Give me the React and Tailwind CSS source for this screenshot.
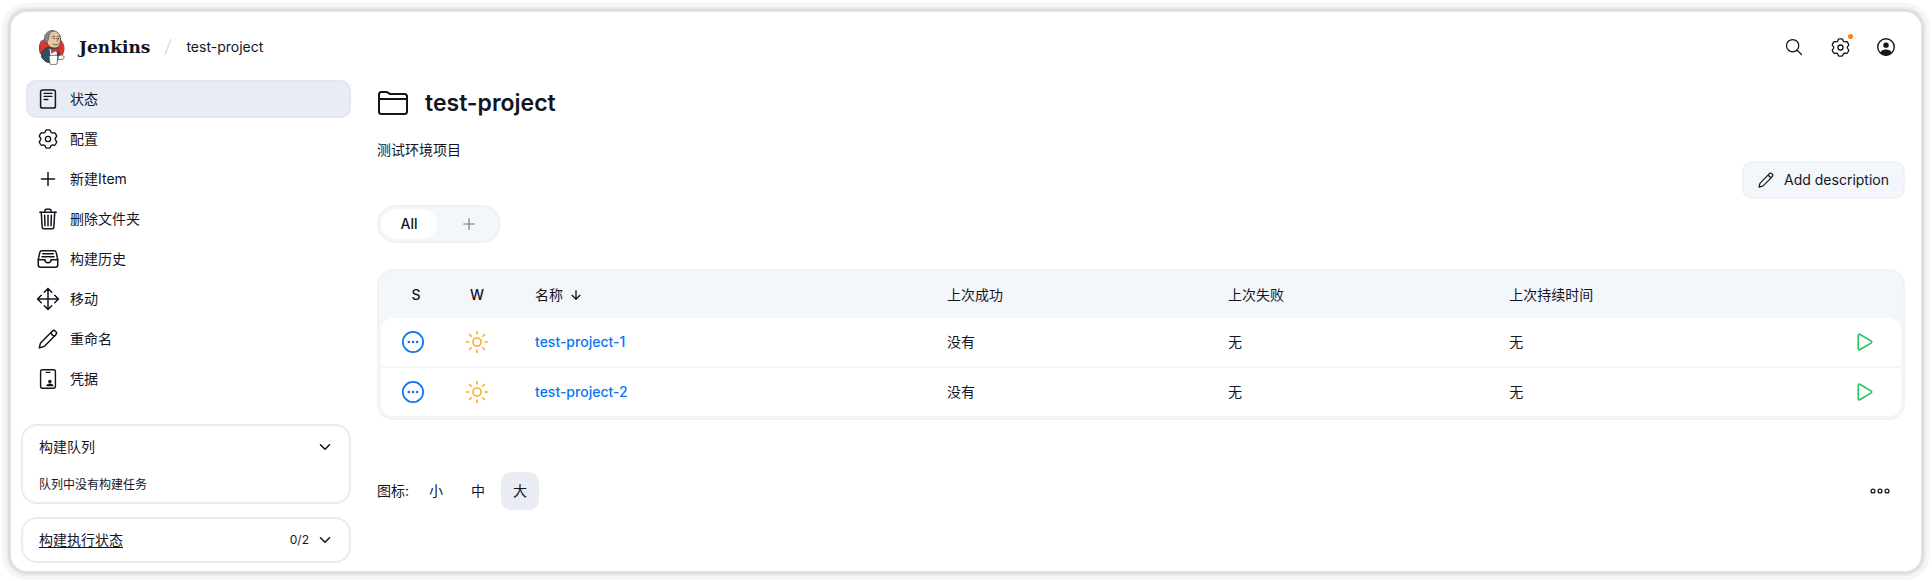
import React from "react";
import {
  IoTrashOutline,
  IoFileTrayFullOutline,
  IoMoveOutline,
  IoPlayOutline,
  IoSearchOutline,
  IoSunnyOutline,
} from "react-icons/io5";

const stroke = {
  fill: "none",
  stroke: "currentColor",
  strokeWidth: 32,
  strokeLinecap: "round",
  strokeLinejoin: "round",
};

function Svg({ className, children }) {
  return (
    <svg viewBox="0 0 512 512" className={className} aria-hidden="true" {...stroke}>
      {children}
    </svg>
  );
}

const gearPath = (() => {
  const points = [];
  for (let i = 0; i < 120; i += 1) {
    const a = (i / 120) * Math.PI * 2;
    const wave = Math.tanh(2.2 * (Math.cos(6 * (a - Math.PI / 2)) + 0.35));
    const r = 208 + 26 * wave;
    points.push(`${(256 + r * Math.cos(a)).toFixed(1)} ${(256 + r * Math.sin(a)).toFixed(1)}`);
  }
  return `M${points.join("L")}Z`;
})();

const GearIcon = ({ className }) => (
  <Svg className={className}>
    <path d={gearPath} strokeWidth="36" />
    <circle cx="256" cy="256" r="68" strokeWidth="36" />
  </Svg>
);

const StatusIcon = ({ className }) => (
  <Svg className={className}>
    <rect x="66" y="24" width="380" height="464" rx="48" strokeWidth="38" />
    <path d="M156 112h200M156 188h200M156 268h96" strokeWidth="36" />
  </Svg>
);

const PlusIcon = ({ className }) => (
  <Svg className={className}>
    <path d="M256 88v336M88 256h336" strokeWidth="38" />
  </Svg>
);

const PencilIcon = ({ className }) => (
  <Svg className={className}>
    <path d="M358 62c26-26 58-34 80-12l22 22c22 22 16 56-10 82L170 434c-10 10-20 16-34 20L32 484l26-104c4-14 10-24 20-34L358 62z" strokeWidth="38" />
    <path d="M340 82c0 54 34 90 90 92" strokeWidth="38" />
  </Svg>
);

const CredentialsIcon = ({ className }) => (
  <Svg className={className}>
    <rect x="66" y="20" width="380" height="472" rx="52" strokeWidth="36" />
    <path d="M208 84h96" />
    <g fill="currentColor" stroke="none">
      <circle cx="304" cy="318" r="46" />
      <path d="M212 444c0-50 38-72 92-72s92 22 92 72z" />
    </g>
  </Svg>
);

const FolderIcon = ({ className }) => (
  <Svg className={className}>
    <path d="M440 432H72a40 40 0 0 1-40-40V120a40 40 0 0 1 40-40h75.900a40 40 0 0 1 22.200 6.700l27.800 18.600a40 40 0 0 0 22.200 6.700H440a40 40 0 0 1 40 40v240a40 40 0 0 1-40 40zM32 192h448" />
  </Svg>
);

const UserIcon = ({ className }) => (
  <Svg className={className}>
    <circle cx="256" cy="256" r="212" strokeWidth="36" />
    <g fill="currentColor" stroke="none">
      <circle cx="256" cy="208" r="70" />
      <path d="M110 400c20-56 80-80 146-80s126 24 146 80c-36 44-88 72-146 72s-110-28-146-72z" />
    </g>
  </Svg>
);

const ChevronIcon = ({ className }) => (
  <Svg className={className}>
    <path d="M112 184l144 144 144-144" strokeWidth="50" />
  </Svg>
);

const SortArrowIcon = ({ className }) => (
  <Svg className={className}>
    <path d="M112 268l144 144 144-144M256 392V100" strokeWidth="48" />
  </Svg>
);

const NotBuiltIcon = ({ className }) => (
  <Svg className={className}>
    <circle cx="256" cy="256" r="236" strokeWidth="40" />
    <g fill="currentColor" stroke="none">
      <circle cx="160" cy="256" r="30" />
      <circle cx="256" cy="256" r="30" />
      <circle cx="352" cy="256" r="30" />
    </g>
  </Svg>
);

const MoreIcon = ({ className }) => (
  <Svg className={className}>
    <circle cx="76" cy="256" r="50" />
    <circle cx="256" cy="256" r="50" />
    <circle cx="436" cy="256" r="50" />
  </Svg>
);

function JenkinsLogo() {
  return (
    <svg viewBox="0 0 52 70" className="h-[35px] w-[26px]" aria-hidden="true">
      <ellipse cx="26" cy="37" rx="25" ry="25" fill="#d33833" />
      <path d="M3 48c-3-10-3-20 3-28" fill="none" stroke="#7d2a27" strokeWidth="2" />
      <path d="M5 54c3 5 7 9 12 11l18-1 5-8c1-9-1-17-6-20l-18-1c-7 4-11 10-11 19z" fill="#335061" stroke="#1d2b35" strokeWidth="1.500" />
      <path d="M21 37l7 5 7-5 1 16H23z" fill="#f4f4f4" />
      <path d="M14 16C15 5 23 1 30 2c8 1 13 7 13 16 0 11-3 18-12 18-8 0-16-6-17-20z" fill="#e6c8a4" stroke="#5b4333" strokeWidth="1.800" />
      <path d="M15 26c-5-5-6-14-1-19 4-5 10-7 16-6-6 2-10 6-10 11 0 5-2 10-5 14z" fill="#85888c" stroke="#4e4f55" strokeWidth="1.200" />
      <path d="M26 14c2-2 4-2 6-1M36 13c2-1 4-1 5 0M35 16c2 3 4 5 1 7M28 28c4 3 8 2 11 0" fill="none" stroke="#5a3b2a" strokeWidth="1.600" strokeLinecap="round" />
      <circle cx="30" cy="17" r="1.400" fill="#231f20" />
      <circle cx="39" cy="17" r="1.400" fill="#231f20" />
      <path d="M24 36l8 4 8-5v10l-8-3-7 4z" fill="#d33833" stroke="#81211f" strokeWidth="1" />
      <path d="M20 52c6-2 12-2 18 0l-2 16c-5 2-10 2-14 0z" fill="#fff" stroke="#44494e" strokeWidth="1.500" />
      <path d="M38 54c4-5 9-5 12-1 1 4-2 6-6 6l-6-1z" fill="#fff" stroke="#44494e" strokeWidth="1.500" />
    </svg>
  );
}

const navItems = [
  { label: "状态", Icon: StatusIcon, active: true },
  { label: "配置", Icon: GearIcon },
  { label: "新建Item", Icon: PlusIcon },
  { label: "删除文件夹", Icon: IoTrashOutline, wide: true },
  { label: "构建历史", Icon: IoFileTrayFullOutline, wide: true },
  { label: "移动", Icon: IoMoveOutline, wide: true },
  { label: "重命名", Icon: PencilIcon },
  { label: "凭据", Icon: CredentialsIcon },
];

const jobs = ["test-project-1", "test-project-2"];

function Header() {
  return (
    <header className="flex h-[68px] items-center justify-between pt-0.5 pr-4 pl-7">
      <nav aria-label="面包屑" className="flex items-center">
        <a href="#home" className="flex items-center gap-3.5">
          <JenkinsLogo />
          <span className="font-['DejaVu_Serif',serif] text-[17px] font-bold">Jenkins</span>
        </a>
        <svg viewBox="0 0 8 18" className="mx-3.5 h-[18px] w-2" aria-hidden="true">
          <path d="M7 1L1 17" stroke="#d9dee8" strokeWidth="1.500" fill="none" />
        </svg>
        <a href="#project">test-project</a>
      </nav>
      <div className="flex items-center gap-2">
        <button type="button" aria-label="搜索" className="grid size-[38px] place-items-center">
          <IoSearchOutline className="size-5" />
        </button>
        <button type="button" aria-label="系统管理" className="relative grid size-[38px] place-items-center">
          <GearIcon className="size-[19px]" />
          <span className="absolute top-1.5 right-1.5 size-[5px] rounded-full bg-[#fe820a]" />
        </button>
        <button type="button" aria-label="用户" className="grid size-[38px] place-items-center">
          <UserIcon className="size-5" />
        </button>
      </div>
    </header>
  );
}

function Sidebar() {
  return (
    <aside className="flex w-[340px] shrink-0 flex-col pl-2.5">
      <nav aria-label="任务" className="flex flex-col gap-0.5 pl-[5px]">
        {navItems.map(({ label, Icon, active, wide }) => (
          <a
            key={label}
            href="#task"
            className={
              active
                ? "flex h-[38px] items-center gap-3 rounded-[10px] border-2 border-[#e2e6ef] bg-[#e8ecf4] px-2.5"
                : "flex h-[38px] items-center gap-3 rounded-[10px] border-2 border-transparent px-2.5"
            }
          >
            <Icon className={wide ? "-m-0.5 size-6" : "size-5"} />
            <span>{label}</span>
          </a>
        ))}
      </nav>
      <section className="mt-[26px] rounded-2xl border-2 border-[#e8edf4] px-4">
        <div className="flex h-[42px] items-center justify-between">
          <h2>构建队列</h2>
          <button type="button" aria-label="折叠构建队列">
            <ChevronIcon className="size-4" />
          </button>
        </div>
        <p className="flex h-[34px] items-center text-xs">队列中没有构建任务</p>
      </section>
      <section className="mt-[13px] flex h-[46px] items-center justify-between rounded-2xl border-2 border-[#e8edf4] px-4">
        <a href="#executors" className="underline underline-offset-2">
          构建执行状态
        </a>
        <div className="flex items-center gap-2">
          <span className="text-xs">0/2</span>
          <button type="button" aria-label="折叠构建执行状态">
            <ChevronIcon className="size-4" />
          </button>
        </div>
      </section>
    </aside>
  );
}

function JobTable() {
  return (
    <div className="mt-[26px] rounded-2xl border-2 border-[#f0f2f6] bg-[#f3f6fa] px-0.5">
      <table className="w-full table-fixed border-separate border-spacing-x-0 border-spacing-y-0.5 text-left">
        <colgroup>
          <col className="w-16" />
          <col className="w-16" />
          <col className="w-[27.1%]" />
          <col className="w-[18.5%]" />
          <col className="w-[18.5%]" />
          <col />
          <col className="w-[72px]" />
        </colgroup>
        <thead>
          <tr className="h-[43px]">
            <th className="pl-1.5 text-center font-medium">S</th>
            <th className="text-center font-medium">W</th>
            <th className="pl-[26px] font-normal">
              <button type="button" className="flex items-center gap-1.5">
                名称
                <SortArrowIcon className="size-3.5" />
              </button>
            </th>
            <th className="pl-[26px] font-normal">上次成功</th>
            <th className="pl-[26px] font-normal">上次失败</th>
            <th className="pl-[26px] font-normal">上次持续时间</th>
            <th aria-label="操作" />
          </tr>
        </thead>
        <tbody>
          {jobs.map((name) => (
            <tr key={name} className="group h-12">
              <td className="rounded-l-[3px] bg-white group-first:rounded-tl-xl group-last:rounded-bl-xl">
                <NotBuiltIcon className="mx-auto size-[22px] text-[#0a74f5]" />
              </td>
              <td className="bg-white">
                <IoSunnyOutline className="mx-auto size-[26px] text-[#fdac2e]" />
              </td>
              <td className="bg-white pl-[26px]">
                <a href="#job" className="font-medium text-[#0a74f5]">
                  {name}
                </a>
              </td>
              <td className="bg-white pl-[26px]">没有</td>
              <td className="bg-white pl-[26px]">无</td>
              <td className="bg-white pl-[26px]">无</td>
              <td className="rounded-r-[3px] bg-white group-first:rounded-tr-xl group-last:rounded-br-xl">
                <button type="button" aria-label={`构建 ${name}`} className="mx-auto block">
                  <IoPlayOutline className="size-6 text-[#1ec35c]" />
                </button>
              </td>
            </tr>
          ))}
        </tbody>
      </table>
    </div>
  );
}

function Main() {
  return (
    <main className="min-w-0 flex-1 pt-1 pr-4 pl-[26px]">
      <div className="flex h-[38px] items-center gap-4">
        <FolderIcon className="size-8" />
        <h1 className="text-[23px] font-semibold">test-project</h1>
      </div>
      <p className="mt-[18px] h-[21px] leading-5">测试环境项目</p>
      <div className="flex justify-end">
        <button
          type="button"
          className="flex h-[38px] items-center gap-2.5 rounded-[10px] border-2 border-[#f0f2f6] bg-[#f3f6fa] px-3.5"
        >
          <PencilIcon className="size-4" />
          Add description
        </button>
      </div>
      <div className="mt-1.5 flex">
        <div className="flex h-[38px] items-center gap-1 rounded-full border-2 border-[#eff1f5] bg-[#f3f6fa] p-0.5">
          <a href="#all" className="flex h-[30px] w-14 items-center justify-center rounded-full bg-white font-medium">
            All
          </a>
          <a href="#new-view" aria-label="新建视图" className="grid h-[30px] w-14 place-items-center text-[#747582]">
            <PlusIcon className="size-4" />
          </a>
        </div>
      </div>
      <JobTable />
      <div className="mt-[52px] flex items-center justify-between">
        <div className="flex items-center gap-1">
          <span className="w-9 whitespace-nowrap">图标:</span>
          <button type="button" className="size-[38px]">小</button>
          <button type="button" className="size-[38px]">中</button>
          <button type="button" className="size-[38px] rounded-[10px] bg-[#e9edf3]">大</button>
        </div>
        <button type="button" aria-label="更多" className="mr-1.5 grid size-[38px] place-items-center">
          <MoreIcon className="size-5" />
        </button>
      </div>
    </main>
  );
}

export default function App() {
  return (
    <div className="min-h-screen bg-white px-[11px] pt-3 pb-[11px] font-['Inter','Noto_Sans_CJK_SC',sans-serif] text-sm text-[#14141f]">
      <div className="rounded-2xl bg-white pb-2 shadow-[0_0_0_1px_#e6e6e6,0_0_0_3px_#dddddd,0_0_0_5px_#ebebeb,0_0_0_9px_#f6f6f6]">
        <Header />
        <div className="flex">
          <Sidebar />
          <Main />
        </div>
      </div>
    </div>
  );
}
